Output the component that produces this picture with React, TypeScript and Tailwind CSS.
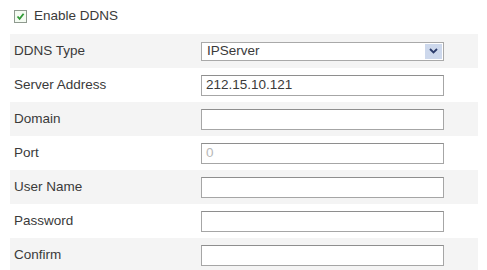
import React from "react";

const ROWS: { label: string; value?: string; kind?: "select" | "disabled" }[] = [
  { label: "DDNS Type", value: "IPServer", kind: "select" },
  { label: "Server Address", value: "212.15.10.121" },
  { label: "Domain" },
  { label: "Port", value: "0", kind: "disabled" },
  { label: "User Name" },
  { label: "Password" },
  { label: "Confirm" },
];

function Check() {
  return (
    <span className="w-[13px] h-[13px] border border-[#8f9a8f] bg-[#f4fbf2] flex items-center justify-center">
      <svg width="9" height="9" viewBox="0 0 9 9">
        <path d="M1.5 4.5 L3.6 6.8 L7.6 1.8" fill="none" stroke="#2f9a35" strokeWidth="1.8" />
      </svg>
    </span>
  );
}

function Field({ value, kind }: { value?: string; kind?: string }) {
  if (kind === "select") {
    return (
      <div className="w-[243px] h-[19px] border border-[#a9a9a9] bg-white flex items-center">
        <span className="flex-1 pl-[5px] text-[13.5px] text-[#3a3a3a]">{value}</span>
        <span className="w-[17px] h-[15px] mr-[1px] bg-[#cdd8ec] flex items-center justify-center">
          <svg width="9" height="6" viewBox="0 0 9 6">
            <path d="M1 1 L4.5 4.5 L8 1" fill="none" stroke="#2c3c6c" strokeWidth="1.8" />
          </svg>
        </span>
      </div>
    );
  }
  return (
    <div className="w-[243px] h-[21px] border border-[#a6a6a6] border-t-[#8e8e8e] bg-white flex items-center">
      <span className={"pl-[4px] text-[13.5px] " + (kind === "disabled" ? "text-[#b8b8b8]" : "text-[#3a3a3a]")}>
        {value}
      </span>
    </div>
  );
}

export default function App() {
  return (
    <div className="w-[487px] h-[270px] bg-white overflow-hidden pl-[10px] pr-[9px]" style={{ fontFamily: '"Liberation Sans", Arial, sans-serif' }}>
      <div className="h-[34px] flex items-center gap-[7px] pl-[4px] pb-[2px]">
        <Check />
        <span className="text-[13.5px] text-[#3a3a3a]">Enable DDNS</span>
      </div>
      {ROWS.map((r, i) => (
        <div key={r.label} className={"h-[34px] flex items-center " + (i % 2 === 0 ? "bg-[#f4f4f4]" : "bg-white")}>
          <span className="w-[191px] pl-[4px] text-[13.5px] text-[#3a3a3a]">{r.label}</span>
          <Field value={r.value} kind={r.kind} />
        </div>
      ))}
    </div>
  );
}
